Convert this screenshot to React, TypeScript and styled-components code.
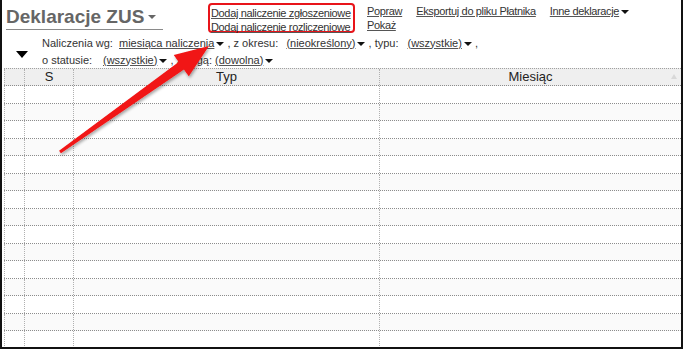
import React from 'react'
import styled, { createGlobalStyle } from 'styled-components'

const GlobalStyle = createGlobalStyle`
  html, body {
    margin: 0;
    padding: 0;
    background: #ffffff;
  }
  body {
    font-family: "Liberation Sans", Arial, sans-serif;
  }
`

const Frame = styled.div`
  position: relative;
  box-sizing: border-box;
  width: 683px;
  height: 349px;
  border-left: 2px solid #111;
  border-right: 2px solid #111;
  border-bottom: 2px solid #111;
  overflow: hidden;
  display: flex;
  flex-direction: column;
  font-size: 11px;
  color: #333;
`

const Toolbar = styled.div`
  display: flex;
  align-items: flex-start;
  height: 36px;
  padding-left: 4px;
`

const TitleBox = styled.div`
  display: flex;
  align-items: center;
  gap: 2px;
  margin-top: 6px;
  padding-bottom: 1px;
  border-bottom: 1px solid #8a8a8a;
  width: 157px;
`

const Title = styled.span`
  font-size: 19px;
  font-weight: bold;
  color: #666;
  line-height: 22px;
`

const SmallCaret = styled.span<{ color?: string }>`
  display: inline-block;
  width: 0;
  height: 0;
  border-left: 4px solid transparent;
  border-right: 4px solid transparent;
  border-top: 4px solid ${({ color }) => color || '#111'};
  margin-left: 2px;
  vertical-align: middle;
`

const Highlight = styled.div`
  margin-left: 45px;
  margin-top: 3px;
  box-sizing: border-box;
  width: 147px;
  height: 30px;
  border: 2px solid #e8141a;
  border-radius: 4px;
  padding: 1px 0 0 1px;
  display: flex;
  flex-direction: column;
`

const LinkStack = styled.div<{ ml: number }>`
  margin-left: ${({ ml }) => ml}px;
  margin-top: 4px;
  display: flex;
  flex-direction: column;
`

const Link = styled.span`
  color: #333;
  text-decoration: underline;
  text-decoration-color: #555;
  line-height: 14px;
  letter-spacing: -0.35px;
  white-space: nowrap;
`

const Filters = styled.div`
  display: flex;
  height: 35px;
`

const BigCaretCell = styled.div`
  width: 40px;
  padding: 18px 0 0 14px;
  box-sizing: border-box;
`

const BigCaret = styled.span`
  display: block;
  width: 0;
  height: 0;
  border-left: 6px solid transparent;
  border-right: 6px solid transparent;
  border-top: 7px solid #000;
`

const FilterRows = styled.div`
  display: flex;
  flex-direction: column;
  padding-top: 1px;
`

const FilterRow = styled.div`
  display: flex;
  align-items: center;
  height: 17px;
  white-space: nowrap;
`

const Label = styled.span<{ w?: number }>`
  display: inline-block;
  width: ${({ w }) => (w ? `${w}px` : 'auto')};
`

const Choice = styled.span<{ w?: number }>`
  display: inline-block;
  width: ${({ w }) => (w ? `${w}px` : 'auto')};
  text-decoration: underline;
  text-decoration-color: #555;
`

const Table = styled.div`
  margin-left: 2px;
  display: flex;
  flex-direction: column;
`

const cols = '20px 49px 306px 1fr'

const HeadRow = styled.div`
  display: grid;
  grid-template-columns: ${cols};
  height: 16px;
  background: #efefef;
  border-top: 1px dotted #a0a0a0;
  border-bottom: 1px dotted #8c8c8c;
  font-size: 13px;
  color: #222;
`

const Row = styled.div<{ alt: boolean }>`
  display: grid;
  grid-template-columns: ${cols};
  height: 17.5px;
  box-sizing: border-box;
  background: ${({ alt }) => (alt ? '#fafafa' : '#ffffff')};
  border-bottom: 1px dotted #8c8c8c;
`

const Cell = styled.div<{ center?: boolean }>`
  position: relative;
  border-left: 1px dotted #b0b0b0;
  display: flex;
  align-items: center;
  justify-content: ${({ center }) => (center ? 'center' : 'flex-start')};
  line-height: 16px;
`

const SortMark = styled.span`
  position: absolute;
  right: 4px;
  top: 5px;
  width: 0;
  height: 0;
  border-left: 3px solid transparent;
  border-right: 3px solid transparent;
  border-bottom: 5px solid #d8d8d8;
`

const Overlay = styled.svg`
  position: absolute;
  left: -2px;
  top: 0;
  pointer-events: none;
`

const rows = Array.from({ length: 15 }, (_, i) => i)

export default function App() {
  return (
    <>
      <GlobalStyle />
      <Frame>
        <Toolbar>
          <TitleBox>
            <Title>Deklaracje ZUS</Title>
            <SmallCaret color="#666" />
          </TitleBox>
          <Highlight>
            <Link>Dodaj naliczenie zgłoszeniowe</Link>
            <Link>Dodaj naliczenie rozliczeniowe</Link>
          </Highlight>
          <LinkStack ml={12}>
            <Link>Popraw</Link>
            <Link>Pokaż</Link>
          </LinkStack>
          <LinkStack ml={14}>
            <Link>Eksportuj do pliku Płatnika</Link>
          </LinkStack>
          <LinkStack ml={14}>
            <Link>
              Inne deklaracje
              <SmallCaret />
            </Link>
          </LinkStack>
        </Toolbar>
        <Filters>
          <BigCaretCell>
            <BigCaret />
          </BigCaretCell>
          <FilterRows>
            <FilterRow>
              <Label w={77}>Naliczenia wg:</Label>
              <Choice>
                miesiąca naliczenia
                <SmallCaret />
              </Choice>
              <Label w={62}>&nbsp;, z okresu:</Label>
              <Choice>
                (nieokreślony)
                <SmallCaret />
              </Choice>
              <Label w={42}>&nbsp;, typu:</Label>
              <Choice>
                (wszystkie)
                <SmallCaret />
              </Choice>
              <Label>&nbsp;,</Label>
            </FilterRow>
            <FilterRow>
              <Label w={61}>o statusie:</Label>
              <Choice>
                (wszystkie)
                <SmallCaret />
              </Choice>
              <Label>&nbsp;, z flagą:&nbsp;</Label>
              <Choice>
                (dowolna)
                <SmallCaret />
              </Choice>
            </FilterRow>
          </FilterRows>
        </Filters>
        <Table>
          <HeadRow>
            <Cell />
            <Cell center>S</Cell>
            <Cell center>Typ</Cell>
            <Cell center>
              Miesiąc
              <SortMark />
            </Cell>
          </HeadRow>
          {rows.map((i) => (
            <Row key={i} alt={i % 2 === 1}>
              <Cell />
              <Cell />
              <Cell />
              <Cell />
            </Row>
          ))}
        </Table>
        <Overlay width="684" height="350" viewBox="0 0 684 350">
          <defs>
            <filter id="shadow" x="-20%" y="-20%" width="140%" height="140%">
              <feDropShadow dx="1" dy="2" stdDeviation="1.5" floodColor="#000" floodOpacity="0.35" />
            </filter>
          </defs>
          <polygon
            points="60.9,153.2 183.9,69.4 188.8,76.3 209,46 173.8,55.1 178.7,62 59.1,150.8"
            fill="#f11414"
            filter="url(#shadow)"
          />
        </Overlay>
      </Frame>
    </>
  )
}
